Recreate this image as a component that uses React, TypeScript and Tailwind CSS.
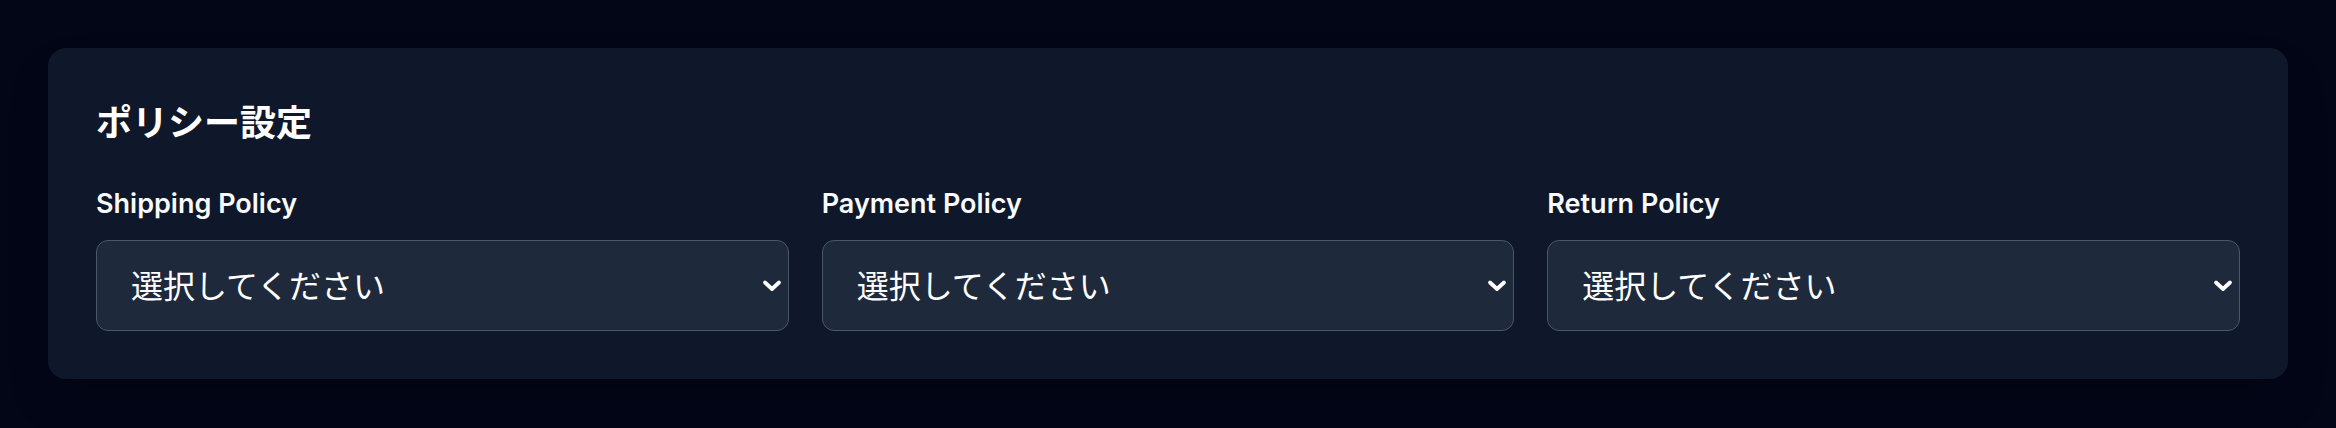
import React from "react";

const policies = ["Shipping Policy", "Payment Policy", "Return Policy"];

const PolicySelect = ({ label }: { label: string }) => {
  return (
    <div className="flex flex-col">
      <label className="mb-[18px] text-[27px] leading-[36px] font-semibold text-[#f8fafc] font-['Inter','Noto_Sans_CJK_JP',sans-serif]">
        {label}
      </label>
      <div className="relative">
        <select className="w-full h-[91px] appearance-none rounded-[12px] border-[1.5px] border-[#4b5768] bg-[#1e293b] pl-[34px] pr-12 pb-[4px] text-[32px] text-white font-['Noto_Sans_CJK_JP',sans-serif] outline-none">
          <option>選択してください</option>
        </select>
        {/* chevron */}
        <svg
          className="pointer-events-none absolute right-[6px] top-1/2 -translate-y-1/2"
          width="22"
          height="14"
          viewBox="0 0 22 14"
          fill="none"
        >
          <path d="M4 3.5L11 10L18 3.5" stroke="white" strokeWidth="3.8" strokeLinecap="round" strokeLinejoin="round" />
        </svg>
      </div>
    </div>
  );
};

export default function App() {
  return (
    <div className="min-h-[428px] bg-[#020617] px-[48px] pt-[48px] pb-[49px]">
      <section className="rounded-[18px] bg-[#0f172a] p-[48px] shadow-2xl">
        <h2 className="mb-[42px] text-[36px] leading-[48px] font-bold text-white font-['Noto_Sans_CJK_JP',sans-serif]">
          ポリシー設定
        </h2>
        <div className="grid grid-cols-3 gap-[33px]">
          {policies.map((p) => (
            <PolicySelect key={p} label={p} />
          ))}
        </div>
      </section>
    </div>
  );
}
